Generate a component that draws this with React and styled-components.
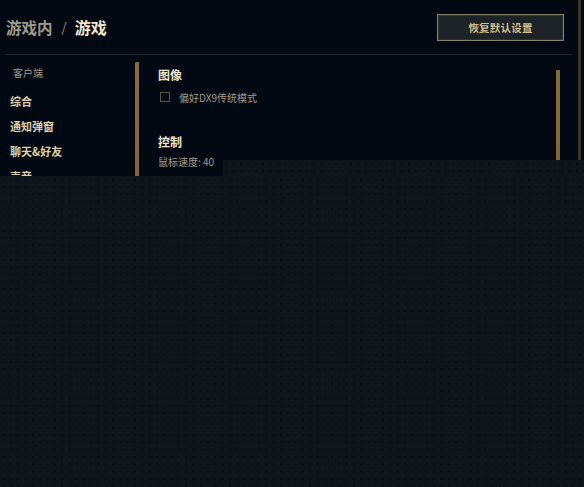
import React from 'react';
import styled, { createGlobalStyle } from 'styled-components';

const Global = createGlobalStyle`
  html, body {
    margin: 0;
    padding: 0;
    background: #030912;
  }
  body {
    font-family: "Noto Sans CJK SC", "Noto Sans", sans-serif;
  }
`;

const Page = styled.div`
  position: relative;
  width: 584px;
  height: 487px;
  overflow: hidden;
  background: #030912;
`;

const Frame = styled.div`
  width: 578px;
  height: 100%;
  border-right: 3px solid #37342a;
  display: flex;
  flex-flow: column;
`;

const Header = styled.header`
  height: 54px;
  margin: 0 6px 0 6px;
  padding-right: 8px;
  border-bottom: 1px solid #1f2631;
  display: flex;
  align-items: center;
  justify-content: space-between;
`;

const Title = styled.h1`
  margin: 0;
  font-size: 15.5px;
  font-weight: 700;
  color: #a09b8c;
  display: flex;
  align-items: center;
  line-height: 20px;
`;

const Slash = styled.span`
  margin: 0 8px 0 9px;
  font-size: 13px;
  font-weight: 400;
`;

const Current = styled.span`
  color: #f0e6d2;
  font-size: 16px;
`;

const ResetBtn = styled.button`
  width: 127px;
  height: 27px;
  margin-top: 1px;
  border: 1px solid #8a846e;
  box-shadow: inset 0 0 0 1px #2e3130;
  background: #1e2328;
  color: #cdbe91;
  font-family: inherit;
  font-size: 10.5px;
  font-weight: 700;
  letter-spacing: 0.2px;
`;

const Body = styled.div`
  flex: 1;
  margin: 0 18px 0 6px;
  display: flex;
`;

const Sidebar = styled.nav`
  width: 129px;
  padding: 6px 0 0 4px;
  box-sizing: border-box;
  display: flex;
  flex-flow: column;
`;

const Group = styled.div`
  padding-left: 3px;
  font-size: 10px;
  line-height: 24px;
  color: #a09b8c;
  margin-bottom: 4px;
`;

const NavItem = styled.div`
  font-size: 11px;
  font-weight: 700;
  line-height: 25px;
  color: #ddd0a8;
`;

const ScrollThumb = styled.div`
  width: 4px;
  margin-top: ${p => p.$top}px;
  height: 300px;
  background: linear-gradient(#8a6c38, #76592a);
  border-radius: 1px;
`;

const Content = styled.section`
  flex: 1;
  padding: 10px 0 0 19px;
`;

const SectionTitle = styled.h2`
  margin: ${p => p.$gap}px 0 0 0;
  font-size: 12px;
  font-weight: 700;
  line-height: 20px;
  color: #f0e6d2;
`;

const CheckRow = styled.label`
  margin-top: 4px;
  display: flex;
  align-items: center;
  height: 16px;
  padding-left: 2px;
  font-size: 10px;
  color: #a09b8c;
`;

const Box = styled.span`
  width: 8px;
  height: 8px;
  border: 1px solid #5a5446;
  margin-right: 9px;
`;

const Value = styled.div`
  margin-top: 2px;
  font-size: 10px;
  line-height: 16px;
  color: #a09b8c;
`;

const Shade = styled.div`
  position: absolute;
  right: 0;
  bottom: 0;
  left: ${p => p.$left}px;
  top: ${p => p.$top}px;
  background-color: #11151c;
  background-image: radial-gradient(circle, #0a0d12 0.6px, transparent 0.9px);
  background-size: 7.3px 7.3px;
`;

export default function App() {
  return (
    <Page>
      <Global />
      <Frame>
        <Header>
          <Title>
            游戏内<Slash>/</Slash><Current>游戏</Current>
          </Title>
          <ResetBtn>恢复默认设置</ResetBtn>
        </Header>
        <Body>
          <Sidebar>
            <Group>客户端</Group>
            <NavItem>综合</NavItem>
            <NavItem>通知弹窗</NavItem>
            <NavItem>聊天&amp;好友</NavItem>
            <NavItem>声音</NavItem>
          </Sidebar>
          <ScrollThumb $top={7} />
          <Content>
            <SectionTitle $gap={0}>图像</SectionTitle>
            <CheckRow>
              <Box />
              偏好DX9传统模式
            </CheckRow>
            <SectionTitle $gap={27}>控制</SectionTitle>
            <Value>鼠标速度: 40</Value>
          </Content>
          <ScrollThumb $top={15} />
        </Body>
      </Frame>
      <Shade $left={223} $top={160} />
      <Shade $left={0} $top={176} />
    </Page>
  );
}
